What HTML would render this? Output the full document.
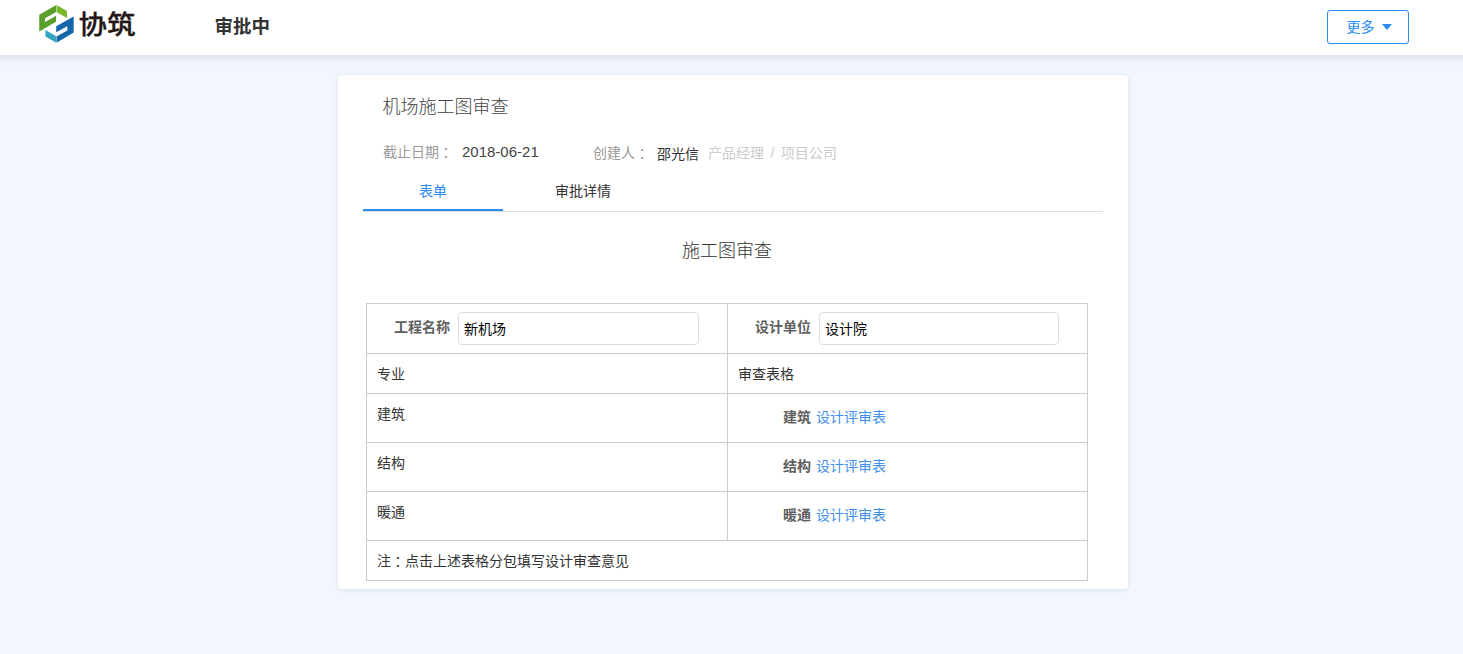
<!DOCTYPE html>
<html lang="zh-CN">
<head>
<meta charset="utf-8">
<title>审批中</title>
<style>
*{box-sizing:border-box;margin:0;padding:0}
html,body{width:1463px;height:654px;overflow:hidden}
body{background:#f2f6fd;font-family:"Liberation Sans","Noto Sans CJK SC",sans-serif;font-size:14px;color:#333;position:relative}
.abs{position:absolute;white-space:nowrap;line-height:1}
.hdr{position:absolute;left:0;top:0;width:1463px;height:55px;background:#fff}
.hdr:before{content:"";position:absolute;left:-30px;top:0;width:1523px;height:55px;background:#fff;box-shadow:0 3px 6px rgba(140,160,200,.24);z-index:-1}
.logo{position:absolute;left:34px;top:2px;width:44px;height:44px}
.brand{left:78.5px;top:10.8px;font-size:28.5px;font-weight:500;-webkit-text-stroke:.3px #231815;transform:scaleY(.935);transform-origin:0 50%;color:#231815;letter-spacing:0}
.status{left:214.5px;top:18px;font-size:18.5px;font-weight:700;color:#333}
.more{position:absolute;left:1327px;top:10px;width:82px;height:34px;border:1px solid #2d8cf0;border-radius:3px;background:#fff}
.more span{left:18.5px;top:9px;font-size:14px;color:#2d8cf0}
.more i{position:absolute;left:54px;top:13px;width:0;height:0;border-left:5px solid transparent;border-right:5px solid transparent;border-top:6px solid #2d8cf0}
.card{position:absolute;left:338px;top:75px;width:790px;height:514px;background:#fff;border-radius:4px;box-shadow:0 1px 4px rgba(160,175,215,.3)}
.title{left:44.5px;top:22.5px;font-size:18px;color:#444;font-weight:300}
.g9{color:#999}
.co{position:relative;left:3.5px}
.gc{color:#ccc}
.tabline{position:absolute;left:25px;top:136px;width:740px;height:1px;background:#ddd}
.tabbar{position:absolute;left:25px;top:134px;width:140px;height:2px;background:#2d8cf0}
.h2{left:-1px;width:780px;text-align:center;top:167px;font-size:18px;color:#333;font-weight:300}
table{position:absolute;left:28px;top:228px;width:721px;border-collapse:collapse;table-layout:fixed}
td{border:1px solid #ccc;vertical-align:top;font-size:14px;color:#333;position:relative;white-space:nowrap}
.inp{position:absolute;top:8px;width:241px;height:33px;border:1px solid #ddd;border-radius:4px;background:#fff;color:#000;font-size:14px;line-height:32px;padding-left:5px}
.lbl{position:absolute;top:16px;font-weight:700;color:#606060;line-height:1}
.t{position:absolute;left:10px;line-height:1}
a{color:#3f90ea;text-decoration:none;margin-left:1px}
b{color:#606060}
</style>
</head>
<body>
<div class="hdr">
  <svg class="logo" viewBox="0 0 654 654">
    <polygon fill="#5a9e2b" points="330,45 78,190 78,440 328,295 328,205 165,298 165,240 328,148"/>
    <polygon fill="#76b82a" points="335,45 490,135 490,238 335,148"/>
    <polygon fill="#1567ab" points="590,215 330,362 330,450 495,360 495,425 335,513 335,605 590,455"/>
    <polygon fill="#33a5bf" points="170,415 330,510 330,605 170,512"/>
  </svg>
  <div class="abs brand">协筑</div>
  <div class="abs status">审批中</div>
  <div class="more"><span class="abs">更多</span><i></i></div>
</div>

<div class="card">
  <div class="abs title">机场施工图审查</div>
  <div class="abs g9" style="left:45px;top:70px">截止日期<span class="co">：</span></div>
  <div class="abs" style="left:124px;top:69px;font-size:15px;color:#444">2018-06-21</div>
  <div class="abs g9" style="left:255px;top:70.5px">创建人<span class="co">：</span></div>
  <div class="abs" style="left:319px;top:72px;color:#333">邵光信</div>
  <div class="abs gc" style="left:370px;top:71px">产品经理<span style="margin:0 2.5px"> / </span>项目公司</div>

  <div class="abs" style="left:25px;width:140px;text-align:center;top:109px;color:#2d8cf0">表单</div>
  <div class="abs" style="left:175px;width:140px;text-align:center;top:109px;color:#333">审批详情</div>
  <div class="tabline"></div>
  <div class="tabbar"></div>

  <div class="abs h2">施工图审查</div>

  <table>
    <colgroup><col style="width:361px"><col style="width:360px"></colgroup>
    <tr style="height:50px">
      <td><span class="lbl" style="left:27px">工程名称</span><div class="inp" style="left:91px">新机场</div></td>
      <td><span class="lbl" style="left:27px">设计单位</span><div class="inp" style="left:91px;width:240px">设计院</div></td>
    </tr>
    <tr style="height:40px">
      <td><span class="t" style="top:13px">专业</span></td>
      <td><span class="t" style="top:13px">审查表格</span></td>
    </tr>
    <tr style="height:49px">
      <td><span class="t" style="top:13px">建筑</span></td>
      <td><span class="t" style="left:55px;top:16px"><b>建筑</b> <a>设计评审表</a></span></td>
    </tr>
    <tr style="height:49px">
      <td><span class="t" style="top:13px">结构</span></td>
      <td><span class="t" style="left:55px;top:16px"><b>结构</b> <a>设计评审表</a></span></td>
    </tr>
    <tr style="height:49px">
      <td><span class="t" style="top:13px">暖通</span></td>
      <td><span class="t" style="left:55px;top:16px"><b>暖通</b> <a>设计评审表</a></span></td>
    </tr>
    <tr style="height:40px">
      <td colspan="2"><span class="t" style="top:13px">注<span class="co">：</span>点击上述表格分包填写设计审查意见</span></td>
    </tr>
  </table>
</div>
</body>
</html>
